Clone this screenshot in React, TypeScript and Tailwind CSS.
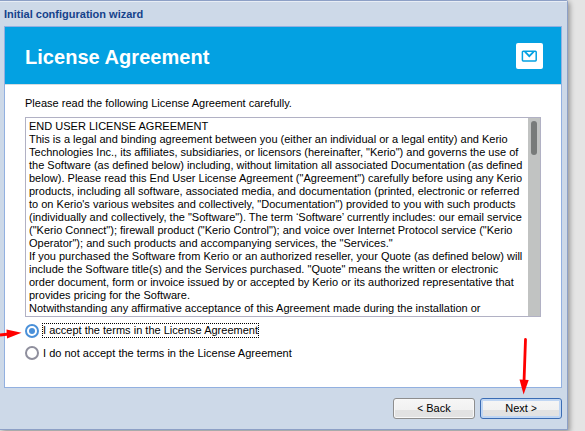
import React from "react";

const agreement: string[] = [
  "END USER LICENSE AGREEMENT",
  "This is a legal and binding agreement between you (either an individual or a legal entity) and Kerio",
  "Technologies Inc., its affiliates, subsidiaries, or licensors (hereinafter, \"Kerio\") and governs the use of",
  "the Software (as defined below) including, without limitation all associated Documentation (as defined",
  "below). Please read this End User License Agreement (\"Agreement\") carefully before using any Kerio",
  "products, including all software, associated media, and documentation (printed, electronic or referred",
  "to on Kerio's various websites and collectively, \"Documentation\") provided to you with such products",
  "(individually and collectively, the \"Software\"). The term ‘Software’ currently includes: our email service",
  "(\"Kerio Connect\"); firewall product (\"Kerio Control\"); and voice over Internet Protocol service (\"Kerio",
  "Operator\"); and such products and accompanying services, the \"Services.\"",
  "If you purchased the Software from Kerio or an authorized reseller, your Quote (as defined below) will",
  "include the Software title(s) and the Services purchased. \"Quote\" means the written or electronic",
  "order document, form or invoice issued by or accepted by Kerio or its authorized representative that",
  "provides pricing for the Software.",
  "Notwithstanding any affirmative acceptance of this Agreement made during the installation or",
];

function Header() {
  return (
    <header className="flex h-[58px] items-center justify-between border-b border-[#d5dce0] bg-[#03a1e2] pr-[18px] pl-5">
      <h1 className="pt-[3px] text-[20px] leading-6 font-bold tracking-[0.04px] text-white">License Agreement</h1>
      <div className="flex h-[26px] w-[27px] items-center rounded-[2px] bg-white pl-[5px]">
        <svg width="16" height="12" viewBox="0 0 16 12" fill="none" stroke="#03a1e2">
          <rect x="1.4" y="1.3" width="13.8" height="9.6" rx="0.8" strokeWidth="1.5" />
          <path d="M3.9 1.6 8.3 6.1l4.4-4.5" strokeWidth="1.8" />
        </svg>
      </div>
    </header>
  );
}

function Radio({ checked, children }: { checked?: boolean; children: React.ReactNode }) {
  return (
    <label className="flex h-[14px] items-center">
      <span
        className={
          checked
            ? "flex size-[14px] shrink-0 items-center justify-center rounded-full border-2 border-[#4a90d9]"
            : "flex size-[14px] shrink-0 items-center justify-center rounded-full border-2 border-[#8f8f9d]"
        }
      >
        {checked && <span className="size-[6px] rounded-full bg-[#4a90d9]" />}
      </span>
      {children}
    </label>
  );
}

export default function App() {
  return (
    <div className="relative h-[431px] w-[585px] overflow-hidden bg-[#e4e4e4] font-['Liberation_Sans',Arial,sans-serif] text-[11px] leading-[13px] text-black">
      <div className="flex h-[430px] w-[568px] flex-col rounded-tr-[2px] border-t border-r border-b border-[#8da0c6] bg-[#cdd9e8] shadow-[2px_2px_5px_rgba(0,0,0,0.35)]">
        <div className="flex h-[25px] items-center border-t border-[#e7edf5] pl-1 font-bold text-[#15428b]">
          Initial configuration wizard
        </div>
        <main className="ml-1 h-[362px] w-[558px] border border-[#92b0e0] bg-white">
          <Header />
          <section className="px-5 pt-3">
            <p className="tracking-[0.01px]">Please read the following License Agreement carefully.</p>
            <div className="mt-[7px] flex h-[200px] w-[516px] overflow-hidden border border-[#b1b1c4]">
              <div className="w-[502px] overflow-hidden pt-[2px] pl-[3px] tracking-[0.005px] whitespace-nowrap">
                {agreement.map((line) => (
                  <div key={line}>{line}</div>
                ))}
              </div>
              <div className="flex w-3 justify-center bg-[#c1c3c2] pt-[3px]">
                <div className="h-[34px] w-[6px] rounded-full bg-[#787b7a]" />
              </div>
            </div>
            <div className="mt-[7px] flex flex-col gap-2">
              <Radio checked>
                <span className="mb-px ml-[3px] h-[15px] w-[217px] border border-dotted border-black leading-[12px] tracking-[0.01px] whitespace-nowrap">
                  I accept the terms in the License Agreement
                </span>
              </Radio>
              <Radio>
                <span className="ml-1 tracking-[0.01px]">I do not accept the terms in the License Agreement</span>
              </Radio>
            </div>
          </section>
        </main>
        <footer className="mt-[10px] mr-[5px] flex justify-end gap-[5px]">
          <button className="flex h-[21px] w-[82px] items-center justify-center rounded-[3px] border border-[#8e8e8e] bg-linear-to-b from-[#f6f6f6] from-0% via-[#f1f1f1] via-60% to-[#e2e2e2] to-60% pb-px shadow-[inset_0_0_0_1px_#f8f8f8]">
            <span className="pt-px pr-[3px] text-[10px]">&lt;</span>Back
          </button>
          <button className="flex h-[21px] w-[82px] items-center justify-center rounded-[3px] border border-[#3a6cb4] bg-linear-to-b from-[#f6f6f6] from-0% via-[#f1f1f1] via-60% to-[#e2e2e2] to-60% pb-px shadow-[inset_0_0_0_2px_#c0d6f3]">
            Next<span className="pt-px pl-[3px] text-[10px]">&gt;</span>
          </button>
        </footer>
      </div>
      <svg className="pointer-events-none absolute inset-0" width="585" height="431" viewBox="0 0 585 431">
        <path d="M0 335 9 334" stroke="#ff0000" strokeWidth="2.8" />
        <path d="M6.5 329.6 21.5 332.7 7 338.6Z" fill="#ff0000" />
        <path d="M525.5 339.5 524 382" stroke="#ff0000" strokeWidth="2.8" strokeLinecap="round" />
        <path d="M519.5 379.5 528.7 380 523.6 394.5Z" fill="#ff0000" />
      </svg>
    </div>
  );
}
